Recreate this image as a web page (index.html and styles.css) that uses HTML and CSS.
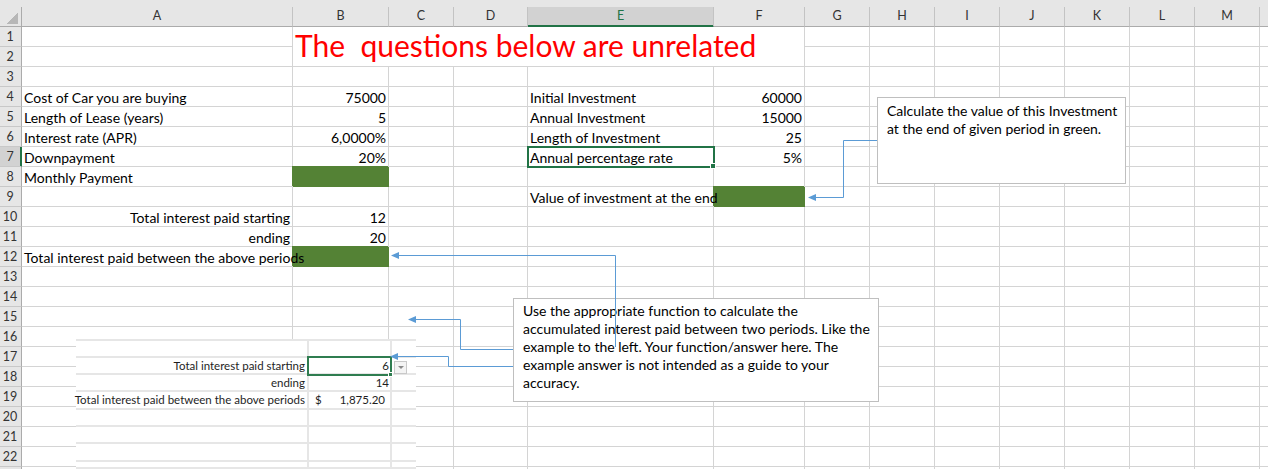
FILE: index.html
```html
<!DOCTYPE html>
<html lang="en">
<head>
  <meta charset="UTF-8">
  <meta name="viewport" content="width=device-width, initial-scale=1.0">
  <title>Loan and Investment Exercises</title>
  <link rel="stylesheet" href="styles.css">
</head>
<body>
  <div class="sheet">
    <div class="ribbon-edge"></div>
    <div class="grid">
      <div class="corner"></div>
      <div class="colhead">A</div><div class="colhead">B</div><div class="colhead">C</div><div class="colhead">D</div><div class="colhead on">E</div><div class="colhead">F</div><div class="colhead">G</div><div class="colhead">H</div><div class="colhead">I</div><div class="colhead">J</div><div class="colhead">K</div><div class="colhead">L</div><div class="colhead">M</div><div class="colhead"></div>

      <div class="rowhead">1</div><div></div><div class="title">The&nbsp; questions below are unrelated</div><div></div><div></div><div></div><div></div><div></div><div></div><div></div><div></div>
      <div class="rowhead">2</div><div></div><div></div><div></div><div></div><div></div><div></div><div></div><div></div><div></div>
      <div class="rowhead">3</div><div></div><div></div><div></div><div></div><div></div><div></div><div></div><div></div><div></div><div></div><div></div><div></div><div></div><div></div>
      <div class="rowhead">4</div><div>Cost of Car you are buying</div><div class="num">75000</div><div></div><div></div><div>Initial Investment</div><div class="num">60000</div><div></div><div></div><div></div><div></div><div></div><div></div><div></div><div></div>
      <div class="rowhead">5</div><div>Length of Lease (years)</div><div class="num">5</div><div></div><div></div><div>Annual Investment</div><div class="num">15000</div><div></div><div></div><div></div><div></div><div></div><div></div><div></div><div></div>
      <div class="rowhead">6</div><div>Interest rate (APR)</div><div class="num">6,0000%</div><div></div><div></div><div>Length of Investment</div><div class="num">25</div><div></div><div></div><div></div><div></div><div></div><div></div><div></div><div></div>
      <div class="rowhead on">7</div><div>Downpayment</div><div class="num">20%</div><div></div><div></div><div class="selected">Annual percentage rate</div><div class="num">5%</div><div></div><div></div><div></div><div></div><div></div><div></div><div></div><div></div>
      <div class="rowhead">8</div><div>Monthly Payment</div><div class="fill"></div><div></div><div></div><div></div><div></div><div></div><div></div><div></div><div></div><div></div><div></div><div></div><div></div>
      <div class="rowhead">9</div><div></div><div></div><div></div><div></div><div class="spill"><span>Value of investment at the end</span></div><div class="fill"></div><div></div><div></div><div></div><div></div><div></div><div></div><div></div><div></div>
      <div class="rowhead">10</div><div class="num">Total interest paid starting</div><div class="num">12</div><div></div><div></div><div></div><div></div><div></div><div></div><div></div><div></div><div></div><div></div><div></div><div></div>
      <div class="rowhead">11</div><div class="num">ending</div><div class="num">20</div><div></div><div></div><div></div><div></div><div></div><div></div><div></div><div></div><div></div><div></div><div></div><div></div>
      <div class="rowhead">12</div><div class="spill"><span>Total interest paid between the above periods</span></div><div class="fill"></div><div></div><div></div><div></div><div></div><div></div><div></div><div></div><div></div><div></div><div></div><div></div><div></div>
      <div class="rowhead">13</div><div></div><div></div><div></div><div></div><div></div><div></div><div></div><div></div><div></div><div></div><div></div><div></div><div></div><div></div>
      <div class="rowhead">14</div><div></div><div></div><div></div><div></div><div></div><div></div><div></div><div></div><div></div><div></div><div></div><div></div><div></div><div></div>
      <div class="rowhead">15</div><div></div><div></div><div></div><div></div><div></div><div></div><div></div><div></div><div></div><div></div><div></div><div></div><div></div><div></div>
      <div class="rowhead">16</div><div></div><div></div><div></div><div></div><div></div><div></div><div></div><div></div><div></div><div></div><div></div><div></div><div></div><div></div>
      <div class="rowhead">17</div><div></div><div></div><div></div><div></div><div></div><div></div><div></div><div></div><div></div><div></div><div></div><div></div><div></div><div></div>
      <div class="rowhead">18</div><div></div><div></div><div></div><div></div><div></div><div></div><div></div><div></div><div></div><div></div><div></div><div></div><div></div><div></div>
      <div class="rowhead">19</div><div></div><div></div><div></div><div></div><div></div><div></div><div></div><div></div><div></div><div></div><div></div><div></div><div></div><div></div>
      <div class="rowhead">20</div><div></div><div></div><div></div><div></div><div></div><div></div><div></div><div></div><div></div><div></div><div></div><div></div><div></div><div></div>
      <div class="rowhead">21</div><div></div><div></div><div></div><div></div><div></div><div></div><div></div><div></div><div></div><div></div><div></div><div></div><div></div><div></div>
      <div class="rowhead">22</div><div></div><div></div><div></div><div></div><div></div><div></div><div></div><div></div><div></div><div></div><div></div><div></div><div></div><div></div>
      <div class="rowhead"></div><div></div><div></div><div></div><div></div><div></div><div></div><div></div><div></div><div></div><div></div><div></div><div></div><div></div><div></div>
    </div>

    <!-- pasted picture of the worked example -->
    <div class="snapshot">
      <div></div><div></div><div></div>
      <div class="label">Total interest paid starting</div><div class="val picked">6</div><div class="extra"><span class="dropdown"></span></div>
      <div class="label">ending</div><div class="val">14</div><div></div>
      <div class="label">Total interest paid between the above periods</div><div class="val money"><span>$</span><span>1,875.20</span></div><div></div>
      <div></div><div></div><div></div>
      <div></div><div></div><div></div>
      <div></div><div></div><div></div>
      <div></div><div></div><div></div>
    </div>

    <div class="note note-invest">
      Calculate the value of this Investment<br>
      at the end of given period in green.
    </div>

    <div class="note note-interest">
      Use the appropriate function to calculate the<br>
      accumulated interest paid between two periods. Like the<br>
      example to the left. Your function/answer here. The<br>
      example answer is not intended as a guide to your<br>
      accuracy.
    </div>

    <svg class="connectors" width="1268" height="469" viewBox="0 0 1268 469">
      <g fill="none" stroke="#5b9bd5" stroke-width="1">
        <path d="M877 140.5H843.5V197.5H815"/>
        <path d="M615.5 347V255.5H398"/>
        <path d="M513 349.5H460.5V319.5H415"/>
        <path d="M513 366.5H448.5V356.5H397"/>
      </g>
      <g fill="#5b9bd5">
        <path d="M808 197.5l8-3.5v7z"/>
        <path d="M391 255.5l8-3.5v7z"/>
        <path d="M408 319.5l8-3.5v7z"/>
        <path d="M390 356.5l8-3.5v7z"/>
      </g>
    </svg>
  </div>
</body>
</html>
```

FILE: styles.css
```css
body {
  margin: 0;
  background: #fff;
  font-family: Lato, "Liberation Sans", sans-serif;
  color: #000;
}
.sheet {
  position: relative;
  width: 1268px;
  height: 469px;
  overflow: hidden;
}
.ribbon-edge {
  height: 7px;
  background: #e6e6e6;
}
.grid {
  display: grid;
  width: 1325px;
  grid-template-columns: 22px 271px 96px 65px 74px 186px 91px 65px 65px 65px 65px 65px 65px 65px 65px;
  grid-template-rows: 20px repeat(23, 20px);
  font-size: 14px;
}
.grid > div {
  box-sizing: border-box;
  border-right: 1px solid #d4d4d4;
  border-bottom: 1px solid #d4d4d4;
  padding: 1px 2px 0;
  line-height: 19px;
  white-space: nowrap;
}
.grid > .corner {
  background: linear-gradient(135deg, transparent 50%, #b7b7b7 50%) no-repeat right 3px bottom 2px / 11px 11px, #e6e6e6;
  border-right-color: #ababab;
  border-bottom-color: #ababab;
}
.grid > .colhead {
  background: #e6e6e6;
  border-right-color: #c3c3c3;
  border-bottom-color: #ababab;
  padding: 0;
  text-align: center;
  font-size: 12.5px;
  line-height: 18px;
  color: #333;
}
.grid > .colhead.on {
  background: #d2d2d2;
  color: #217346;
  border-bottom-color: #217346;
  box-shadow: inset 0 -1px 0 #217346;
}
.grid > .rowhead {
  background: #e6e6e6;
  border-right-color: #ababab;
  border-bottom-color: #c8c8c8;
  padding: 0 1px 0 0;
  text-align: center;
  font-size: 12.5px;
  color: #333;
}
.grid > .rowhead.on {
  background: #d2d2d2;
  border-right-color: #217346;
  box-shadow: inset -1px 0 0 #217346;
}
.grid > .title {
  grid-column: span 5;
  grid-row: span 2;
  padding: 0 2px;
  font-size: 30px;
  line-height: 36px;
  color: #ff0000;
}
.num {
  text-align: right;
}
.grid > .fill {
  background: #548235;
  border-color: #548235;
  box-shadow: -1px -1px 0 #548235;
}
.spill span {
  position: relative;
  z-index: 1;
}
.selected {
  position: relative;
}
.selected::before {
  content: "";
  position: absolute;
  top: -1px;
  left: -1px;
  right: -2px;
  bottom: -2px;
  border: 2px solid #217346;
}
.selected::after {
  content: "";
  position: absolute;
  right: -3px;
  bottom: -3px;
  width: 4px;
  height: 4px;
  background: #217346;
  border: 1px solid #fff;
}

.snapshot {
  position: absolute;
  left: 76px;
  top: 339px;
  width: 340px;
  height: 130px;
  box-sizing: border-box;
  background: #fff;
  border-top: 2px solid #e6e6e6;
  display: grid;
  grid-template-columns: 233px 83px 1fr;
  grid-template-rows: 17px 17px 17px 18px 17px 17px 18px 1fr;
  font-size: 11.5px;
  color: #1e1e1e;
}
.snapshot > div {
  box-sizing: border-box;
  border-bottom: 2px solid #e6e6e6;
  padding: 0 1px;
  line-height: 15px;
  white-space: nowrap;
}
.snapshot > div:nth-child(3n+1),
.snapshot > div:nth-child(3n+2) {
  border-right: 2px solid #e6e6e6;
}
.snapshot > .label {
  display: flex;
  justify-content: flex-end;
  padding-right: 2px;
}
.snapshot > .val {
  text-align: right;
}
.snapshot > .money {
  display: flex;
  justify-content: space-between;
  padding: 0 5px 0 6px;
  line-height: 16px;
}
.picked {
  position: relative;
}
.picked::before {
  content: "";
  position: absolute;
  top: -2px;
  left: -2px;
  right: -2px;
  bottom: -3px;
  border: 2px solid #2f7d50;
}
.picked::after {
  content: "";
  position: absolute;
  right: -3px;
  bottom: -4px;
  width: 3px;
  height: 3px;
  background: #2f7d50;
  border: 1px solid #fff;
}
.dropdown {
  display: block;
  position: relative;
  width: 11px;
  height: 11px;
  margin: 3px 0 0 1px;
  border: 1px solid #c9c9c9;
  background: #f4f4f4;
}
.dropdown::after {
  content: "";
  position: absolute;
  left: 3px;
  top: 4px;
  border-left: 3px solid transparent;
  border-right: 3px solid transparent;
  border-top: 3px solid #8a8a8a;
}

.note {
  position: absolute;
  box-sizing: border-box;
  background: #fff;
  border: 1px solid #bfbfbf;
  padding: 4px 9px;
  font-size: 14px;
  line-height: 17.8px;
  white-space: nowrap;
}
.note-invest {
  left: 877px;
  top: 97px;
  width: 249px;
  height: 87px;
}
.note-interest {
  left: 513px;
  top: 298px;
  width: 366px;
  height: 104px;
  padding-top: 3px;
  line-height: 17.9px;
}
.connectors {
  position: absolute;
  left: 0;
  top: 0;
  pointer-events: none;
}
```
